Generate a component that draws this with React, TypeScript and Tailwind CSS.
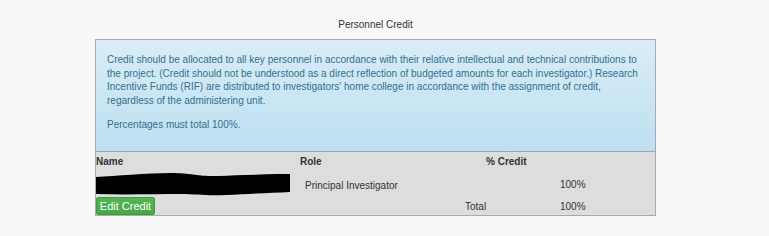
import React from "react";

export default function App() {
  return (
    <div className="w-[769px] h-[236px] bg-[#f8f8f8] overflow-hidden text-[10px] text-[#333] font-['Liberation_Sans',Arial,sans-serif]">
      <div className="ml-[95px] w-[561px]">
        <div className="pt-[18px] h-[39px] text-center leading-[14px]">Personnel Credit</div>
        <div className="border border-[#aaa]">
          <div className="bg-gradient-to-b from-[#d9edf7] to-[#bddff0] text-[#31708f] pl-[11px] pr-[10px] pt-[13px] pb-[19.5px] border-b border-[#9aa8b0] leading-[13.7px]">
            <p className="mb-[10px]">
              Credit should be allocated to all key personnel in accordance with their relative intellectual and technical contributions to the project. (Credit should not be understood as a direct reflection of budgeted amounts for each investigator.) Research Incentive Funds (RIF) are distributed to investigators' home college in accordance with the assignment of credit, regardless of the administering unit.
            </p>
            <p>Percentages must total 100%.</p>
          </div>
          <div className="bg-[#dddddd]">
            <div className="flex h-[19px] items-center font-bold leading-[14px] pt-[1px]">
              <div className="w-[204px]">Name</div>
              <div className="w-[186px]">Role</div>
              <div>% Credit</div>
            </div>
            <div className="flex h-[26px] items-center leading-[14px]">
              <svg width="194" height="26" viewBox="0 0 194 26" className="shrink-0">
                <path
                  d="M0 6 C20 5 50 2 75 2 C95 2 100 5 115 5 C135 5 160 3 194 3 L194 21 C170 22 150 23 130 24 C110 25 100 23 85 23 C60 23 30 24 0 23 Z"
                  fill="#000"
                />
              </svg>
              <div className="ml-[15px] w-[255px] pt-[4px]">Principal Investigator</div>
              <div className="pt-[2px]">100%</div>
            </div>
            <div className="flex h-[18px] items-center leading-[14px]">
              <button className="w-[59px] h-[18px] bg-gradient-to-b from-[#55b555] to-[#47a847] text-white rounded-[2px] border border-[#3d9a3d] leading-[14px] text-[11px] shrink-0">
                Edit Credit
              </button>
              <div className="ml-[310px] w-[95px] pt-[1px]">Total</div>
              <div className="pt-[1px]">100%</div>
            </div>
          </div>
        </div>
      </div>
    </div>
  );
}
